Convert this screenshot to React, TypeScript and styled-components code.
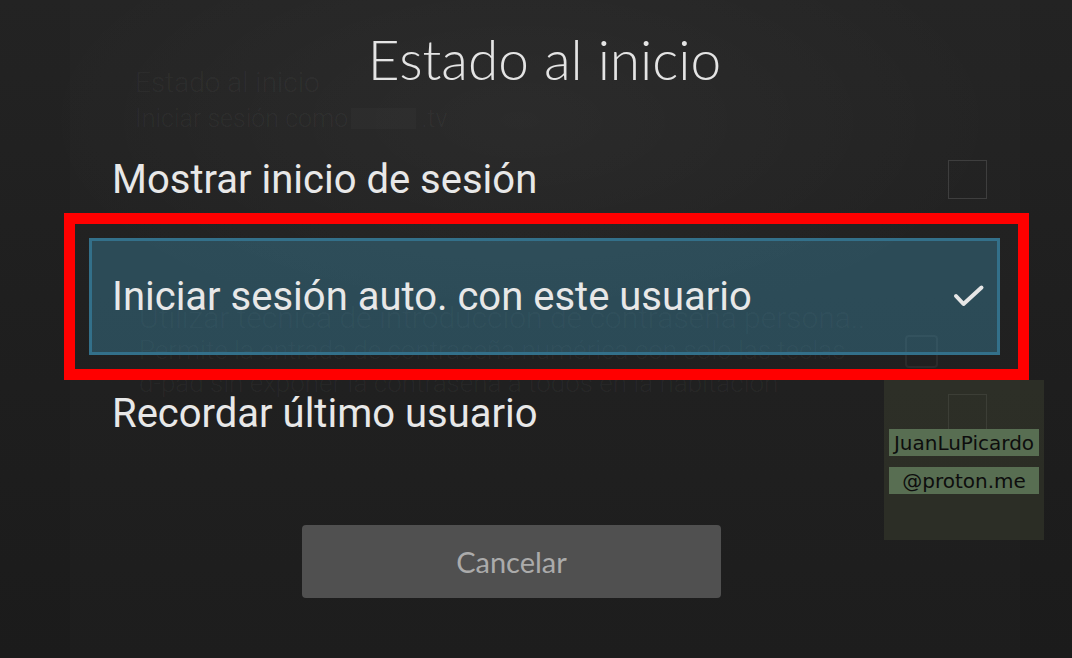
import React from 'react';
import styled, { createGlobalStyle } from 'styled-components';

const GlobalStyle = createGlobalStyle`
  html, body {
    margin: 0;
    padding: 0;
    background: #1b1b1b;
  }
  * {
    box-sizing: border-box;
  }
`;

const Screen = styled.div`
  position: relative;
  width: 1072px;
  height: 658px;
  overflow: hidden;
  font-family: Roboto, 'Noto Sans', sans-serif;
  background:
    radial-gradient(ellipse 700px 320px at 520px 120px, rgba(255, 255, 255, 0.035), transparent 70%),
    linear-gradient(180deg, #232323 0%, #1f1f1f 45%, #1b1b1b 100%);
`;

/* settings page dimmed behind the dialog */
const GhostPanel = styled.div`
  margin-left: 70px;
  width: 950px;
  height: 100%;
  padding: 65px 0 0 65px;
  background: rgba(255, 255, 255, 0.012);
  color: rgba(255, 255, 255, 0.045);
  font-weight: 300;
`;

const GhostLine = styled.div<{ $size: number }>`
  font-size: ${(p) => p.$size}px;
  line-height: 36px;
  white-space: nowrap;
`;

const Redacted = styled.span`
  display: inline-block;
  width: 65px;
  height: 21px;
  margin: 0 5px 0 -3px;
  vertical-align: -2px;
  background: rgba(255, 255, 255, 0.018);
`;

const GhostItem = styled.div`
  display: flex;
  align-items: center;
  margin-top: 165px;
`;

const GhostText = styled.div`
  width: 770px;
  padding-left: 4px;
  white-space: nowrap;
`;

const GhostTitle = styled.div`
  font-size: 30px;
  line-height: 32px;
`;

const GhostDesc = styled.div`
  font-size: 26px;
  line-height: 33px;
`;

const GhostBox = styled.div`
  width: 33px;
  height: 33px;
  border: 2px solid rgba(255, 255, 255, 0.05);
  border-radius: 4px;
`;

const Dialog = styled.div`
  position: absolute;
  inset: 0;
  padding: 27px 0 0 89px;
  display: flex;
  flex-direction: column;
  align-items: flex-start;
`;

const Title = styled.h1`
  width: 911px;
  margin: 0;
  font-family: Lato, 'Open Sans', sans-serif;
  font-weight: 300;
  font-size: 55px;
  line-height: 64px;
  text-align: center;
  color: #e4e4e4;
`;

const OptionList = styled.ul`
  width: 911px;
  margin: 30px 0 0;
  padding: 0;
  list-style: none;
`;

const Option = styled.li<{ $selected?: boolean }>`
  position: relative;
  height: 117px;
  display: flex;
  align-items: center;
  justify-content: space-between;
  padding: 0 10px 0 20px;
  border: 3px solid ${(p) => (p.$selected ? '#33708a' : 'transparent')};
  background: ${(p) => (p.$selected ? 'rgba(68, 171, 211, 0.3)' : 'transparent')};
  font-size: 40px;
  color: #e8e8e8;
`;

const Checkbox = styled.span`
  width: 39px;
  height: 39px;
  border: 1px solid #3e3e3e;
`;

const Mark = styled.span`
  width: 39px;
  height: 39px;
  display: flex;
  align-items: center;
  justify-content: center;
`;

/* red annotation frame drawn over the screenshot */
const Highlight = styled.span`
  position: absolute;
  top: -28px;
  left: -28px;
  right: -32px;
  bottom: -28px;
  border: 11px solid #ff0000;
  pointer-events: none;
`;

const CancelButton = styled.button`
  margin: 53px 0 0 213px;
  width: 419px;
  height: 73px;
  border: none;
  border-radius: 4px;
  background: #505050;
  font-family: Lato, 'Open Sans', sans-serif;
  font-size: 29px;
  color: #ababab;
`;

const Watermark = styled.div`
  position: absolute;
  left: 884px;
  top: 380px;
  width: 160px;
  height: 160px;
  padding-top: 49px;
  display: flex;
  flex-direction: column;
  align-items: center;
  gap: 11px;
  background: rgba(58, 62, 46, 0.5);
`;

const Tag = styled.span`
  width: 150px;
  height: 27px;
  display: flex;
  align-items: center;
  justify-content: center;
  background: #586e52;
  font-family: 'DejaVu Sans', sans-serif;
  font-size: 20px;
  color: #0d0d0d;
`;

const App = () => {
  return (
    <Screen>
      <GlobalStyle />
      <GhostPanel>
        <GhostLine $size={28}>Estado al inicio</GhostLine>
        <GhostLine $size={25}>
          Iniciar sesión como <Redacted />.tv
        </GhostLine>
        <GhostItem>
          <GhostText>
            <GhostTitle>Utilizar técnica de introducción de contraseña persona..</GhostTitle>
            <GhostDesc>Permite la entrada de contraseña numérica con solo las teclas</GhostDesc>
            <GhostDesc>d-pad sin exponer la contraseña a todos en la habitación</GhostDesc>
          </GhostText>
          <GhostBox />
        </GhostItem>
      </GhostPanel>

      <Dialog>
        <Title>Estado al inicio</Title>
        <OptionList>
          <Option>
            Mostrar inicio de sesión
            <Checkbox />
          </Option>
          <Option $selected>
            Iniciar sesión auto. con este usuario
            <Mark>
              <svg width='39' height='39' viewBox='0 0 39 39'>
                <path
                  d='M8 19l7.5 8L33.5 10.5'
                  fill='none'
                  stroke='#e6e6e6'
                  strokeWidth='4'
                  strokeLinecap='round'
                  strokeLinejoin='round'
                />
              </svg>
            </Mark>
            <Highlight />
          </Option>
          <Option>
            Recordar último usuario
            <Checkbox />
          </Option>
        </OptionList>
        <CancelButton>Cancelar</CancelButton>
      </Dialog>

      <Watermark>
        <Tag>JuanLuPicardo</Tag>
        <Tag>@proton.me</Tag>
      </Watermark>
    </Screen>
  );
};

export default App;
